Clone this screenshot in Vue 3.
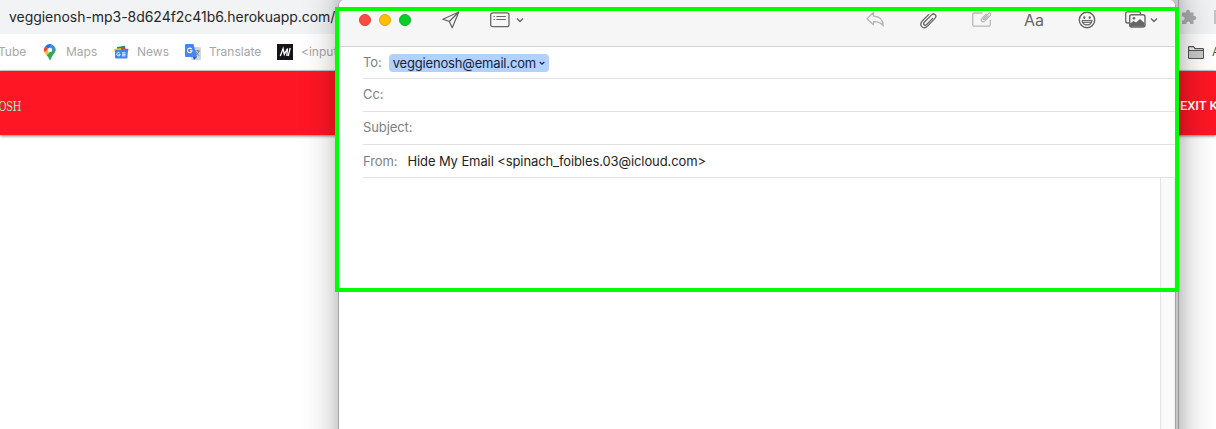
<script setup>
const fields = [
  { label: 'Cc:', cls: 'cc' },
  { label: 'Subject:', cls: 'subject' },
]
</script>

<template>
  <main class="screen">
    <section class="browser">
      <div class="address"><span class="url">veggienosh-mp3-8d624f2c41b6.herokuapp.com/</span>
        <svg class="puzzle" width="16" height="16" viewBox="0 0 16 16"><path d="M1.500 3.500H5V2.700a2 2 0 0 1 4 0v.8h3.500V7h.8a2 2 0 0 1 0 4h-.8v4H9.200v-.7a1.900 1.900 0 0 0-3.800 0v.7H1v-3.600h.8a1.900 1.900 0 0 0 0-3.800H1V4z" fill="#adadad"/></svg>
        <i class="divider"></i>
      </div>
      <nav class="bookmarks">
        <span class="bm tube">Tube</span>
        <svg class="pin" width="12" height="16" viewBox="0 0 12 16"><path d="M6 0a6 6 0 0 0-4.500 2L4 5l4-4.600A6 6 0 0 0 6 0" fill="#1a73e8"/><path d="M1.500 2A5.700 5.700 0 0 0 .7 8.500L4 5z" fill="#ea4335"/><path d="M8 .4 4 5a2.600 2.600 0 0 0 4 3.200l3.300-4.200A6 6 0 0 0 8 .4" fill="#4285f4"/><path d="M.7 8.500 2.500 11 8 4.500 4 5z" fill="#fbbc04"/><path d="M11.400 4C12.800 8 9 10 7.500 13.500Q7 16 6 16t-1.500-2.500L2.500 11z" fill="#34a853"/><circle cx="6" cy="5.900" r="2.200" fill="#fff"/></svg>
        <span class="bm maps">Maps</span>
        <svg class="news" width="15" height="14" viewBox="0 0 15 14"><path d="M3 2 11 .8v5H3z" fill="#0c9d58"/><path d="M0 4l7-1 1 6-6 2z" fill="#fbbc04"/><path d="m8 3 6.500 1L13 10 7 8z" fill="#ea4335"/><rect x="1" y="5" width="12.500" height="8.500" rx="1" fill="#4285f4"/><path d="M6.200 9.300H4.700M6.200 9.300a1.700 1.700 0 1 1-.6-1.400M8 7.800h3.500M8 9.300h3.500M8 10.800h3.500" fill="none" stroke="#fff" stroke-width=".9"/></svg>
        <span class="bm newst">News</span>
        <svg class="translate" width="16" height="16" viewBox="0 0 16 16"><rect x="6" y="3" width="10" height="13" rx="1" fill="#d5d7da"/><path d="M10 7h5M12.500 5.800V7M14 7q-.8 3-3.500 4.500M11 8q1 2.300 3.300 3.700" fill="none" stroke="#607d8b" stroke-width=".9"/><path d="M1 0h7.500L12 13H1q-1 0-1-1V1q0-1 1-1" fill="#4285f4"/><path d="M8 13h4l-3 3z" fill="#3157ba"/><path d="M6.600 5.100A2.300 2.300 0 1 0 7 6.700H4.800" fill="none" stroke="#fff" stroke-width="1.100"/></svg>
        <span class="bm trans">Translate</span>
        <svg class="mdn" width="16" height="16" viewBox="0 0 16 16"><path fill="#15141a" d="M0 0h16v16H0z"/><path d="m3.300 12 2.800-7.500 1.200 5.800 3.200-5.800-.7 7.500M13.200 4l-2 8" fill="none" stroke="#fff" stroke-width="1.300"/></svg>
        <span class="bm input">&lt;input</span>
        <svg class="folder" width="16" height="13" viewBox="0 0 16 13"><path d="M.6 1.200q0-.6.600-.6h4.300l1.500 2h7.800q.6 0 .6.600v8.600q0 .6-.6.600H1.200q-.6 0-.6-.6z" fill="#eee" stroke="#555" stroke-width="1.200"/><path d="M1.200 4.800h13.600v7H1.200z" fill="#cacaca"/><path d="M1 4.500h14" stroke="#555"/></svg>
        <span class="bm all">All</span>
      </nav>
      <header class="site"><span class="brand">VEGGIENOSH</span><span class="exit">EXIT KITCHEN</span></header>
    </section>

    <div class="rear-window"></div>
    <section class="mail">
      <div class="toolbar">
        <i class="light red"></i><i class="light amber"></i><i class="light green"></i>
        <svg class="send" width="18" height="18" viewBox="0 0 18 18"><path d="M16.800 1 .9 8.200 7.300 10.500l2.900 6.200zM7.300 10.500 16.800 1" fill="none" stroke="#666" stroke-width="1.250" stroke-linejoin="round"/></svg>
        <svg class="header-ic" width="20" height="16" viewBox="0 0 20 16"><rect x=".7" y=".9" width="18.300" height="13.800" rx="2" fill="none" stroke="#666" stroke-width="1.300"/><path d="M3.500 4.500h1.300M6.300 4.500h9.500M3.500 7.500h1.300M6.300 7.500h9.500" stroke="#666"/></svg>
        <svg class="chev c1" width="8" height="6" viewBox="0 0 8 6"><path d="m1 1.500 3 3 3-3" fill="none" stroke="#666" stroke-width="1.400"/></svg>
        <svg class="reply" width="19" height="17" viewBox="0 0 19 17"><path d="M7.500 1.500 1 7.700l6.500 6V10.700c4.500 0 7.500.8 9.700 4.300 0-6-3.200-9.500-9.700-9.800z" fill="none" stroke="#b5b5b5" stroke-width="1.300" stroke-linejoin="round"/></svg>
        <svg class="clip" width="18" height="18" viewBox="0 0 18 18"><path d="m13 7.200-6 6.100c-1.900 1.800-4.200-.4-2.400-2.300l7-7.100c2.900-2.700 6.300.6 3.500 3.500l-7.300 7.500c-4.200 4-9.200-.8-5.200-5.100l6.500-6.600" transform="translate(-.3 .2)" fill="none" stroke="#666" stroke-width="1.250" stroke-linecap="round"/></svg>
        <svg class="markup" width="20" height="17" viewBox="0 0 20 17"><path d="M10.500 2H2.500Q.7 2 .7 3.800v9.500q0 1.900 1.800 1.900h14q1.800 0 1.800-1.900V9" fill="none" stroke="#b9b9b9" stroke-width="1.300"/><path d="m16.500 5.500-4 4c-1 .8-1.800 0-1-1l4.500-4.700c1.800-1.600 3.700.4 2 2l-5 5c-2.800 2.400-5-.2-2.800-2.600l4.300-4.500" transform="translate(0 -1)" fill="none" stroke="#b5b5b5" stroke-width="1.100"/></svg>
        <span class="font-button">Aa</span>
        <svg class="smile" width="18" height="18" viewBox="0 0 18 18"><circle cx="9" cy="9" r="7.700" fill="none" stroke="#666" stroke-width="1.400"/><ellipse cx="6.300" cy="6.600" rx="1.100" ry="1.400" fill="#666"/><ellipse cx="11.700" cy="6.600" rx="1.100" ry="1.400" fill="#666"/><path d="M4 9.600h10q-.8 4.300-5 4.300T4 9.600" fill="#f6f6f6" stroke="#666" stroke-width="1.100"/><path d="M4.700 11.500h8.600" stroke="#666" stroke-width=".9"/></svg>
        <svg class="photos" width="21" height="17" viewBox="0 0 21 17"><path d="M4 12H2.500Q.7 12 .7 10V3Q.7.900 2.700.9h11q1.800 0 1.800 2" fill="none" stroke="#666" stroke-width="1.300"/><rect x="4.700" y="3.700" width="15.300" height="12.300" rx="2" fill="#f6f6f6" stroke="#666" stroke-width="1.400"/><path d="m5 12.500 3.500-2.500 2.500 1.500 4-3.500 4.500 4v3.500H5z" fill="#666"/><circle cx="9" cy="7.300" r="1.300" fill="#666"/></svg>
        <svg class="chev c2" width="8" height="6" viewBox="0 0 8 6"><path d="m1 1.500 3 3 3-3" fill="none" stroke="#666" stroke-width="1.400"/></svg>
      </div>
      <div class="row to"><span class="label">To:</span><span class="chip"><span class="address-text">veggienosh@email.com</span><svg class="chip-chev" width="6" height="5" viewBox="0 0 6 5"><path d="m.7 1 2.300 2.200L5.300 1" fill="none" stroke="#1c2d48" stroke-width="1.300"/></svg></span></div>
      <div v-for="f in fields" :key="f.cls" class="row" :class="f.cls"><span class="label">{{ f.label }}</span></div>
      <div class="row from"><span class="label">From:</span><span class="sender">Hide My Email &lt;spinach_foibles.03@icloud.com&gt;</span></div>
      <div class="body"><div class="scroll"></div></div>
    </section>
    <div class="highlight"></div>
  </main>
</template>

<style>
html, body { margin: 0; overflow: hidden; }
</style>
<style scoped>
.screen { position: relative; width: 1216px; height: 429px; overflow: hidden; background: #fff; font-family: Inter, "Liberation Sans", sans-serif; }
.screen * { box-sizing: border-box; }
svg, i { display: block; flex: none; }
span { white-space: nowrap; flex: none; }
.address { height: 34px; background: #f1f3f4; display: flex; align-items: center; padding-left: 9px; color: #25272a; font-size: 14px; }
.url { width: 1171px; letter-spacing: -.04px; line-height: 18px; }
.puzzle { margin-left: 1px; }
.divider { width: 3px; height: 14px; margin-left: 17px; background: #c4c4c4; }
.bookmarks { height: 37px; display: flex; align-items: center; border-bottom: 1px solid #d5d5d5; font-size: 12px; color: #a5a7a9; }
.bm { line-height: 16px; }
.tube { width: 44px; margin-left: -2px; }
.pin { margin-left: 2px; }
.maps { width: 48px; margin-left: 10px; }
.newst { width: 48px; margin-left: 8px; }
.trans { width: 68px; margin-left: 8px; }
.input { width: 887px; margin-left: 8px; }
.all { margin-left: 8px; color: #555; }
.site { height: 64px; background: #ff1625; display: flex; align-items: center; justify-content: space-between; box-shadow: 0 1px 3px #0008; padding-top: 5px; }
.brand { width: 100px; margin-left: -79px; display: flex; justify-content: flex-end; font: 10px "DejaVu Serif", serif; letter-spacing: -.4px; color: #7dffd0; transform: scaleY(1.3); padding-top: 1px; }
.exit { width: 36px; font: 500 13px Roboto, sans-serif; color: #fff; letter-spacing: -.1px; }
.rear-window { position: absolute; left: 340px; top: -20px; width: 839px; height: 500px; background: #c5c5c5; border-right: 1px solid #969696; box-shadow: 0 10px 36px #0005, 0 0 12px #0002; }
.mail { position: absolute; left: 338px; top: 0; width: 838px; height: 440px; background: #fff; border-left: 1px solid #a4a4a4; border-right: 1px solid #a4a4a4; border-radius: 6px 6px 0 0; overflow: hidden; }
.toolbar { height: 47px; padding: 0 0 7px 20px; background: #f6f6f6; border-bottom: 1px solid #d5d5d5; display: flex; align-items: center; }
.light { width: 12px; height: 12px; border-radius: 50%; margin-right: 8px; }
.red { background: #ff4b45; border: 1px solid #e63a36; }
.amber { background: #ffbd05; border: 1px solid #e4a600; }
.green { background: #09cf2b; border: 1px solid #05b321; }
.send { margin-left: 23px; }
.header-ic { margin-left: 30px; }
.c1 { margin-left: 6px; margin-top: 1px; }
.reply { margin-left: 342px; }
.clip { margin-left: 35px; }
.markup { margin-left: 34px; }
.font-button { width: 22px; margin-left: 32px; font-size: 16px; color: #666; }
.smile { margin-left: 32px; }
.photos { margin-left: 29px; }
.c2 { margin-left: 4px; margin-top: 1px; }
.row { margin-left: 24px; height: 33px; border-bottom: 1px solid #e2e2e2; display: flex; align-items: center; font-size: 13px; color: #808080; letter-spacing: -.1px; }
.to { height: 32px; }
.to .label, .cc .label, .subject .label { padding-bottom: 2px; }
.chip { height: 18px; width: 160px; margin-left: 7px; border-radius: 4px; background: #b2d1ff; color: #17233a; display: flex; align-items: center; padding-left: 4px; }
.address-text { width: 146px; letter-spacing: -.17px; }
.chip-chev { margin-top: 2px; }
.sender { margin-left: 10px; color: #242424; letter-spacing: -.1px; }
.body { height: 262px; display: flex; justify-content: flex-end; }
.scroll { width: 15px; background: #fafafa; border-left: 1px solid #e5e5e5; border-right: 1px solid #eee; }
.highlight { position: absolute; left: 335px; top: 7px; width: 844px; height: 285px; border: 4px solid #00ff00; }
</style>
